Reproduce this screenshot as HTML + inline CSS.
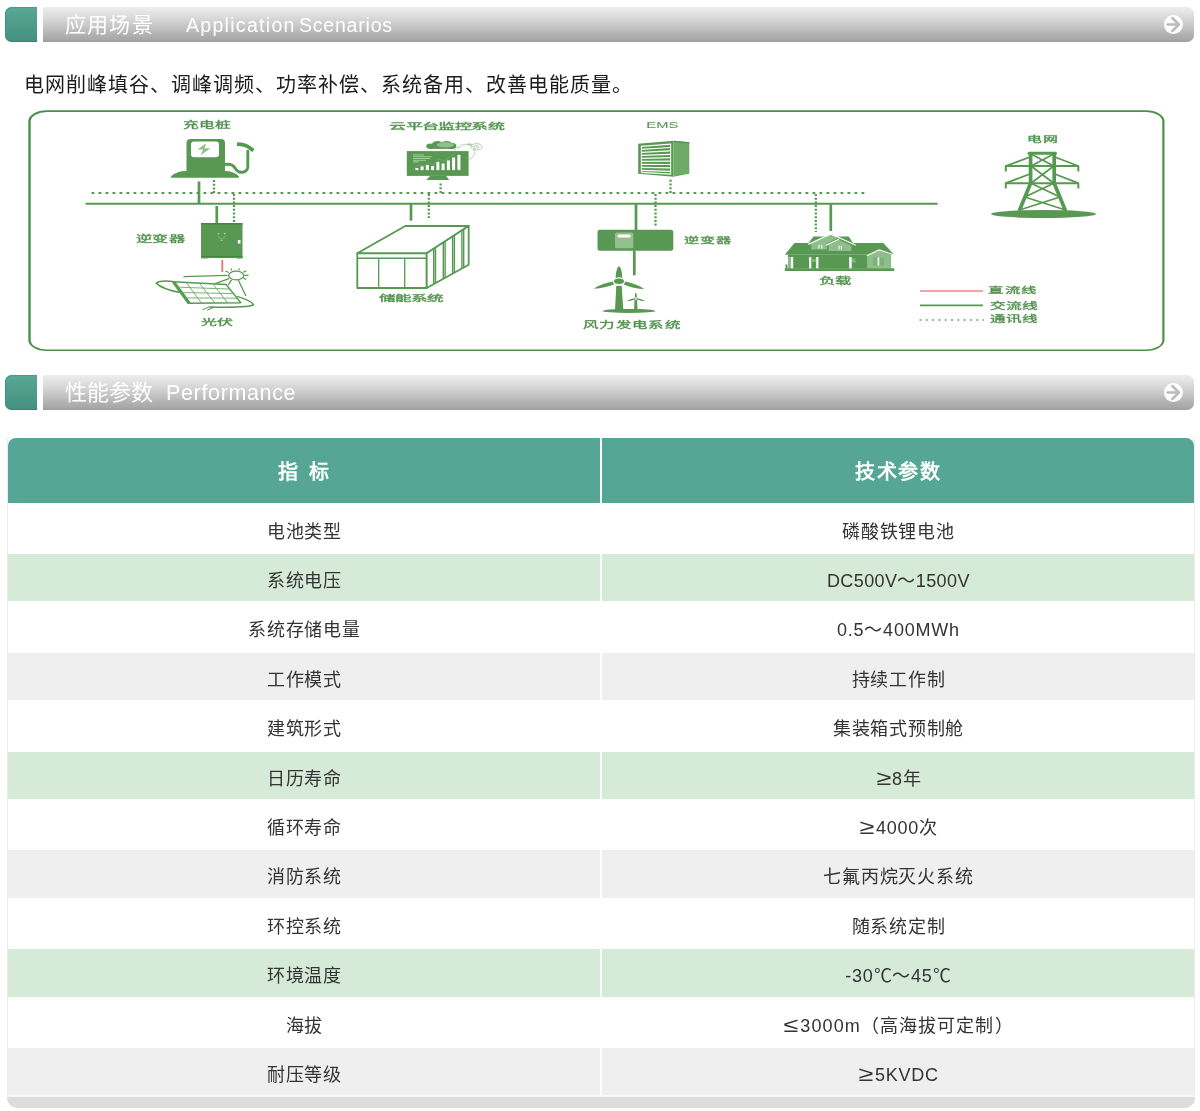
<!DOCTYPE html>
<html lang="zh-CN">
<head>
<meta charset="utf-8">
<title>Application Scenarios</title>
<style>
html,body{margin:0;padding:0;background:#fff;}
body{width:1200px;height:1111px;position:relative;overflow:hidden;font-family:"Liberation Sans",sans-serif;color:#333;}
.abs{position:absolute;}
body>*{will-change:transform;}
.hd-green{position:absolute;left:5px;width:32.2px;height:35px;border-radius:7px 0 0 7px;background:linear-gradient(#57a894,#45907e);box-shadow:inset 1px 0 0 rgba(45,140,115,.55),inset 0 1px 0 rgba(45,150,125,.5),inset 0 -1px 0 rgba(40,125,105,.6);}
.hd-bar{position:absolute;left:43.3px;width:1150.7px;height:34.8px;border-radius:0 7px 7px 0;background:linear-gradient(#eeeeee 0%,#dddddd 25%,#c9c9c9 52%,#b3b3b3 77%,#a7a7a7 94%,#9d9d9d 100%);}
.hd-txt{position:absolute;color:#fff;white-space:nowrap;line-height:35px;height:35px;}
.para{position:absolute;left:24px;top:69.5px;font-weight:300;font-size:20px;line-height:30px;letter-spacing:1px;color:#1c1c1c;white-space:nowrap;}
#tbl{position:absolute;left:7px;top:438.3px;width:1186px;height:658.5px;border-left:1px solid #ececec;border-right:1px solid #ececec;}
.tfoot{position:absolute;left:-1px;top:658.5px;width:1188px;height:11px;background:#dcdcdc;border-radius:0 0 10px 10px;box-shadow:0 -1.8px 0 #f6f6f6;}
.th{position:absolute;top:0;height:64.5px;background:#55a694;color:#fff;font-weight:bold;font-size:20px;text-align:center;line-height:68px;word-spacing:4px;}
.ge{display:inline-block;transform:translateY(-1px) scale(1.5,1.15);margin:0 3.2px 0 2.4px;}
.row{position:absolute;left:0;width:1186px;}
.c{position:absolute;top:0;height:100%;text-align:center;font-size:18px;letter-spacing:0.75px;text-indent:0.75px;color:#333;white-space:nowrap;}
.c1{left:0;width:592px;}
.c2{left:594px;width:592px;}
.g .c{background:#d5ead7;}
.e .c{background:#efefef;}
</style>
</head>
<body>
<!-- header 1 -->
<div class="hd-green" style="top:6.8px"></div>
<div class="hd-bar" style="top:7px"></div>
<div class="hd-txt" style="top:6.5px;left:64.6px;font-size:21px;letter-spacing:1.2px;">应用场景</div>
<div class="hd-txt" style="top:8px;left:186px;font-size:19.5px;letter-spacing:1.3px;">Application<span style="letter-spacing:0.8px;margin-left:-3px"> Scenarios</span></div>
<svg class="abs" style="left:1162px;top:13px" width="24" height="24" viewBox="0 0 24 24"><circle cx="11.5" cy="11.5" r="9.5" fill="#fff"/><path d="M5.6 11.5H16.5M10.3 5L17 11.5L10.3 18" fill="none" stroke="#bcbcbc" stroke-width="2.5" stroke-linecap="round" stroke-linejoin="round"/></svg>

<div class="para">电网削峰填谷、调峰调频、功率补偿、系统备用、改善电能质量。</div>

<!-- DIAGRAM -->
<svg id="dia" class="abs" style="left:0;top:100px" width="1200" height="262" viewBox="0 100 1200 262" font-family="Liberation Sans, sans-serif">
<defs><style>
.g{fill:#589852}.gl{fill:#8fbf8b}.s{fill:none;stroke:#559a50;stroke-linecap:butt}
.t{fill:#4f914b;font-size:9.6px;stroke:#4f914b;stroke-width:.3px}
</style></defs>
<!-- frame -->
<path d="M46.8 110.3H1146.0A18.5 11 0 0 1 1164.5 121.3V340A18.5 11 0 0 1 1146.0 351H46.8A18.5 11 0 0 1 28.3 340V121.3A18.5 11 0 0 1 46.8 110.3ZM47.0 112H1146.0A16.3 9.4 0 0 1 1162.3 121.4V340.20000000000005A16.3 9.4 0 0 1 1146.0 349.6H47.0A16.3 9.4 0 0 1 30.7 340.20000000000005V121.4A16.3 9.4 0 0 1 47.0 112Z" fill="#4b9046" fill-rule="evenodd"/>
<!-- bus lines -->
<line class="s" x1="91.5" y1="193" x2="866" y2="193" stroke-width="2.2" stroke-dasharray="2.8 4.2"/>
<line class="s" x1="85.5" y1="203.8" x2="937.5" y2="203.8" stroke-width="2"/>
<!-- verticals -->
<g class="s" stroke-width="2.7">
<line x1="199" y1="181.5" x2="199" y2="204"/>
<line x1="216.8" y1="206" x2="216.8" y2="223.5"/>
<line x1="411" y1="204" x2="411" y2="220.6"/>
<line x1="636" y1="204" x2="636" y2="230"/>
<line x1="634.3" y1="250.5" x2="634.3" y2="275.3"/>
<line x1="830.8" y1="204" x2="830.8" y2="231"/>
</g>
<g class="s" stroke-width="2.3" stroke-dasharray="2 1.7">
<line x1="214" y1="180" x2="214" y2="193"/>
<line x1="234" y1="194" x2="234" y2="223"/>
<line x1="440.6" y1="183.5" x2="440.6" y2="193"/>
<line x1="428.8" y1="194" x2="428.8" y2="218"/>
<line x1="670.5" y1="179.8" x2="670.5" y2="193"/>
<line x1="655.5" y1="194" x2="655.5" y2="226"/>
<line x1="815.8" y1="194" x2="815.8" y2="232"/>
</g>
<line x1="222.3" y1="260" x2="222.3" y2="272" stroke="#e8766d" stroke-width="1.8"/>

<!-- charger -->
<g class="g">
<path d="M186.5 171V143a4 4 0 0 1 4-4h30.5a4 4 0 0 1 4 4V171q9 0 14 5.5q.3 1.300-1 1.300H172q-1.300 0-1-1.300q5-5.5 15.500-5.500Z"/>
</g>
<rect x="191" y="141.6" width="28" height="15.6" rx="3" fill="#fff"/>
<path d="M206 143.300l-8.500 6.200h5.600l-2.400 5.700 9.800-7h-6z" class="gl"/>
<path class="s" d="M225 164.500c5-1 8 0 10 3.500s4 4.600 7.500 4.200 5.300-2.500 5.300-6V150" stroke-width="2.9"/>
<path class="s" d="M237 144.200q8 .3 11.500 2.800t5 3.500" stroke-width="3.800" stroke-linecap="round"/>
<!-- inverter left -->
<rect class="g" x="201" y="223" width="41.500" height="34.800" rx="1.200"/>
<path d="M201 223h41.500v1.600H201zM201 256h41.500v1.800H201z" fill="#41893e"/>
<path d="M201.500 257h6v1.500h-6zM236.500 257h6v1.500h-6z" class="g"/>
<rect x="237.800" y="240" width="2.700" height="3.500" fill="#fff"/>
<g fill="#b4d6b0"><rect x="217.600" y="233" width="1.800" height="1.200"/><rect x="223.800" y="233" width="1.800" height="1.200"/><rect x="220.700" y="239.600" width="1.800" height="1.200"/></g>
<path d="M218 235.500q0 3 3.600 3t3.600-3" fill="none" stroke="#86b982" stroke-width=".8"/>

<!-- solar -->
<g class="s" stroke-linejoin="round">
<path d="M172.900 281.700L226.100 284.500 240.800 302.800 188.500 303.300Z" stroke-width="1.400" fill="#fff"/>
<path d="M173.500 281.900L189.200 303.200" stroke-width="3.200"/>
<g stroke-width=".9" stroke="#6aa866">
<path d="M186.200 282.400L201.600 303.200M199.500 283.100L214.700 303.100M212.800 283.800L227.700 303"/>
<path d="M176.800 287.100L229.800 289.100M180.700 292.500L233.400 293.600M184.600 297.900L237.100 298.200"/>
</g>
<path d="M173 281.400c-8-.8-14-.3-16.800 1.700 4 4 13 7.500 24.500 9.500" stroke-width="1.500"/>
<path d="M237.200 296.400c8 2.500 14.500 5.300 16.500 8.300-3 2.300-25 2.800-45 2.300" stroke-width="1.500"/>
<path d="M208.700 307L202.300 309.800M214 307.300L207 310.200" stroke-width="1"/>
<path d="M183.500 276.700L227.500 275.300" stroke-width="1.300"/>
<path d="M215.100 283.600L229 278.600" stroke-width="1.300"/>
<path d="M231.500 279.800L228.300 285" stroke-width="1.300"/>
<path d="M238.300 280L245.900 296" stroke-width="1.300"/>
<ellipse cx="236.200" cy="275.500" rx="7.600" ry="4.300" stroke-width="1.300" fill="#fff"/>
<path d="M228.700 272.500L225.500 271M232 270.500L230.800 268.700M238.500 270.300L239.500 268.500M243.200 272.300L246.500 270.700M244.500 275.400L248.500 275.400M243.500 278.300L246.200 279.400" stroke-width="1.200"/>
</g>
<!-- monitor -->
<rect class="g" x="406.800" y="151.100" width="61.800" height="24.800"/>
<path class="g" d="M430 175.900h16.100l3 4H426.300z"/>
<g fill="#fff">
<rect x="415.400" y="168" width="3" height="2.100"/><rect x="420.600" y="166.400" width="3" height="3.700"/><rect x="425.900" y="165" width="3" height="5.100"/><rect x="431.100" y="166.100" width="3" height="4"/><rect x="436.400" y="161.900" width="3" height="8.200"/><rect x="441.600" y="163.500" width="3" height="6.600"/><rect x="446.900" y="160.500" width="3" height="9.600"/><rect x="452.100" y="157.500" width="3" height="12.600"/><rect x="457.400" y="154.900" width="3" height="15.200"/>
</g>
<g fill="#a5cca1"><rect x="413.100" y="154.400" width="11" height="1"/><rect x="413.100" y="156.200" width="18.500" height="1"/><rect x="413.100" y="158" width="17" height="1"/><rect x="413.100" y="159.800" width="13" height="1"/><rect x="413.100" y="161.400" width="5.600" height="1"/></g>
<path d="M413 169l6-4 5 1 5-3.500 5 2.500 5-6 5 2 5-3.500 6-4" fill="none" stroke="#86b982" stroke-width=".5"/>
<g class="g"><ellipse cx="430.3" cy="146.2" rx="4" ry="2.7"/><ellipse cx="437.5" cy="144.4" rx="5.5" ry="3.4"/><ellipse cx="446.5" cy="144.3" rx="6" ry="3.3"/><ellipse cx="452.5" cy="146" rx="3.8" ry="2.9"/><rect x="430" y="145" width="22.5" height="3.9"/></g>
<ellipse class="gl" cx="445.400" cy="144.800" rx="8.600" ry="2.700"/>
<g fill="none" stroke="#9cc698" stroke-width=".8">
<path d="M454.500 151c1-3 3-4 5-3.500.5-2.500 3.500-3.500 6-2.500 2-1.500 5-1 6 1 2.500.5 3.500 3 2.500 5 1.500 2 1 4.500-1.500 5.500-.5 2-2.500 3-4.500 2.500"/>
<ellipse cx="476.500" cy="146.800" rx="5.500" ry="3.200"/><ellipse cx="476.500" cy="146.800" rx="2.300" ry="1.300"/>
</g>
<ellipse cx="469.500" cy="144.500" rx="2.300" ry="1" fill="#9cc698"/>
<!-- container -->
<g class="s" stroke-width="1.800" stroke-linejoin="round">
<path d="M357.300 253.300L405.300 226H468.700L426.700 253.300Z" fill="#fff"/>
<path d="M357.300 253.300H426.700V288H357.300Z" fill="#fff"/>
<path d="M426.700 253.300L468.700 226V264.700L426.700 288Z" fill="#fff"/>
<path d="M357.300 258.200H426.700" stroke-width="1.500"/>
<path d="M378.700 258.200V288M404.700 258.200V288" stroke-width="1.300"/>
<g stroke-width="1.4">
<path d="M433.700 248.700V284.100M435.500 247.600V283.100M443.300 242.500V278.800M445.100 241.300V277.800M452.600 236.500V273.600M454.400 235.300V272.600M461.900 230.400V268.500M463.700 229.200V267.500"/>
</g>
</g>

<!-- EMS -->
<path class="g" d="M638.200 143.800L673.500 140.700V176.800L638.200 173.700Z"/>
<path d="M673.500 140.700L689.300 142.300V173.800L673.500 176.800Z" fill="#6eab69"/>
<path d="M673.500 140.700L689.300 142.300V143.500L673.500 142.100Z" fill="#4d9149"/>
<g stroke="#fff" stroke-width="1.250" fill="none">
<path d="M641.500 146.300L670.500 144.100M641.500 149.300L670.500 147.500M641.500 152.300L670.500 150.900M641.500 155.300L670.500 154.300M641.500 158.300L670.500 157.700M641.500 161.300L670.500 161.100M641.500 164.300L670.500 164.500M641.500 167.300L670.500 167.900M641.500 170.300L670.500 171.300M641.500 172.400L670.500 174.200"/>
<path d="M641.300 145.500V172.500M670.700 143.500V174.500" stroke-width="1"/>
</g>
<!-- inverter right -->
<rect class="g" x="597.500" y="229.700" width="75.800" height="21.100" rx="2.500"/>
<rect x="615" y="232.500" width="18.300" height="15.800" rx="1.500" fill="#93c08f"/>
<rect x="617.500" y="234.600" width="13.300" height="3" rx="1.500" fill="#fff"/>
<!-- turbines -->
<g class="g">
<ellipse cx="619" cy="281.300" rx="5" ry="2.700"/>
<path d="M619 266.300c2 .8 3.400 7 3.300 11.700q-3.300-1.400-6.600 0c-.1-4.700 1.300-10.900 3.300-11.700z"/>
<path d="M593.700 288.700c5-3.500 12-6 19-7.300q.3 1.800 1.700 2.900c-6 2.500-14 4.500-20.700 4.400z"/>
<path d="M644.300 289c-5-3.500-12-6.200-19-7.500q-.3 1.800-1.700 2.900c6 2.600 14 4.600 20.700 4.600z"/>
<path d="M616.300 285.700q2.700 .8 5.400 0L623.300 310H615z"/>
<ellipse cx="629" cy="310.900" rx="26.500" ry="2"/>
<path d="M635.800 292.700q1.100 .5 1 4.700h-2q-.1-4.200 1-4.700z"/>
<path d="M626 301.300q4.500-2.600 9-3.300l.5 1.300q-4.500 1.800-9.500 2z"/>
<path d="M645.700 301.300q-4.500-2.600-9-3.300l-.5 1.300q4.500 1.800 9.500 2z"/>
<path d="M634.500 299.800h2.600l.4 10h-3.400z"/>
</g>
<!-- house -->
<g>
<path class="g" d="M813.500 236.400H848.700L853 243H808.600Z"/>
<path class="g" d="M794.500 242.900H883.300L894.200 254.800H784.800Z"/>
<path class="g" d="M788 254.800H891V268.500H788Z"/>
<path d="M788 257H791V268.300H788Z" fill="#8fbe8a"/>
<path class="g" d="M784.800 268.300H894.200V271H784.800Z"/>
<path d="M785.500 264.500H787.500V268.300H785.500Z" class="g"/>
<path d="M811.300 243.500L830.800 234.500 838 238 827 243.500V249.400H811.300Z" fill="#8fbe8a"/>
<path d="M828.600 245L838.900 239.800 851.400 245.500V251H828.600Z" fill="#8fbe8a"/>
<path d="M867.100 255.300L879 250.400 890.900 255V268.300H867.100Z" fill="#8fbe8a"/>
<g fill="none" stroke="#fff" stroke-width="1.200">
<path d="M808.400 244.400L830.800 233.900 855.800 245.200"/>
<path d="M826.500 245.100L838.900 239.200"/>
<path d="M866.800 255.700L879 250 893.700 254.700"/>
</g>
<g fill="#fff">
<rect x="791" y="257" width="2.200" height="11.300"/><rect x="809.100" y="257" width="2.200" height="11.300"/><rect x="816.200" y="257" width="2.200" height="11.300"/><rect x="849.200" y="257" width="2.500" height="11.300"/>
<rect x="818.500" y="244.800" width="1" height="3.800"/><rect x="821.300" y="244.800" width="1" height="3.800"/><rect x="838.500" y="245.600" width="1" height="4"/><rect x="840.800" y="245.600" width="1" height="4"/>
<rect x="877.800" y="257.500" width="1.300" height="8"/>
</g>
<g fill="#7db378"><rect x="873" y="257.500" width="4" height="8"/><rect x="880" y="257.500" width="4" height="8"/><rect x="811.500" y="259" width="4.500" height="3"/><rect x="852" y="258.500" width="3.500" height="4"/></g>
</g>
<!-- tower -->
<g class="s" stroke-linejoin="round">
<path d="M1029 153.200H1055.500" stroke-width="3" stroke-linecap="round"/>
<path d="M1030.600 153V183.200L1019.200 211M1054.200 153V183.200L1065.600 211" stroke-width="3.7"/>
<path d="M1005.800 171.500V166H1078.300V171.500M1005.800 188.500V183.200H1078.300V188.500" stroke-width="2"/>
<path d="M1005.800 166L1030 157M1078.300 166L1054.800 157M1005.800 183.200L1030 174M1078.300 183.200L1054.800 174" stroke-width="1.800"/>
<path d="M1031 154L1053.800 166M1053.800 154L1031 166M1031 166L1053.800 183.200M1053.800 166L1031 183.200M1031 183.200L1060 197M1053.800 183.200L1024.800 197M1024.800 197L1064 209.500M1060 197L1021 209.500" stroke-width="1.700"/>
</g>
<ellipse class="g" cx="1043.500" cy="214" rx="52.500" ry="4"/>
<!-- legend -->
<line x1="920" y1="291.1" x2="983" y2="291.1" stroke="#ec8a83" stroke-width="1.5"/>
<line class="s" x1="920" y1="305.4" x2="983" y2="305.4" stroke-width="1.9"/>
<line x1="919.5" y1="320" x2="984" y2="320" stroke="#6aa866" stroke-width="1.4" stroke-dasharray="2 4.3"/>
<!-- labels -->
<g class="t">
<text x="182.8" y="128.3" font-size="8.7" textLength="48.9" lengthAdjust="spacingAndGlyphs">充电桩</text>
<text x="389.2" y="129.4" font-size="8.3" textLength="114.8" lengthAdjust="spacingAndGlyphs">云平台监控系统</text>
<text x="1027.3" y="141.9" font-size="7.7" textLength="30.9" lengthAdjust="spacingAndGlyphs">电网</text>
<text x="135.8" y="242.0" font-size="8.9" textLength="49.1" lengthAdjust="spacingAndGlyphs">逆变器</text>
<text x="201.1" y="324.7" font-size="8.2" textLength="31.1" lengthAdjust="spacingAndGlyphs">光伏</text>
<text x="378.5" y="300.7" font-size="8.2" textLength="65.0" lengthAdjust="spacingAndGlyphs">储能系统</text>
<text x="683.8" y="242.7" font-size="8.5" textLength="48.1" lengthAdjust="spacingAndGlyphs">逆变器</text>
<text x="583.1" y="327.6" font-size="9.5" textLength="97.9" lengthAdjust="spacingAndGlyphs">风力发电系统</text>
<text x="819.0" y="284.0" font-size="9.1" textLength="32.4" lengthAdjust="spacingAndGlyphs">负载</text>
<text x="988.3" y="292.9" font-size="8.5" textLength="48.9" lengthAdjust="spacingAndGlyphs">直流线</text>
<text x="990.3" y="308.5" font-size="8.8" textLength="48.2" lengthAdjust="spacingAndGlyphs">交流线</text>
<text x="989.8" y="322.4" font-size="8.6" textLength="48.7" lengthAdjust="spacingAndGlyphs">通讯线</text>
<text x="646.3" y="128.2" font-size="9.2" stroke="none" textLength="32" lengthAdjust="spacingAndGlyphs">EMS</text>
</g>
</svg>

<!-- header 2 -->
<div class="hd-green" style="top:375.3px;height:35.3px"></div>
<div class="hd-bar" style="top:375.4px;height:35.2px"></div>
<div class="hd-txt" style="top:374.5px;left:64.9px;font-size:22px;letter-spacing:0px;">性能参数</div>
<div class="hd-txt" style="top:375.8px;left:165.6px;font-size:21.5px;letter-spacing:0.65px;">Performance</div>
<svg class="abs" style="left:1162px;top:381px" width="24" height="24" viewBox="0 0 24 24"><circle cx="11.5" cy="11.5" r="9.5" fill="#fff"/><path d="M5.6 11.5H16.5M10.3 5L17 11.5L10.3 18" fill="none" stroke="#bcbcbc" stroke-width="2.5" stroke-linecap="round" stroke-linejoin="round"/></svg>

<!-- TABLE -->
<div id="tbl">
<div class="th" style="left:0;width:592px;border-radius:8px 0 0 0;letter-spacing:1px;">指 标</div>
<div class="th" style="left:594px;width:592px;border-radius:0 8px 0 0;letter-spacing:1.5px;">技术参数</div>
<div class="row " style="top:66.5px;height:47.5px;line-height:55px;"><div class="c c1">电池类型</div><div class="c c2">磷酸铁锂电池</div></div>
<div class="row g" style="top:115.9px;height:47.5px;line-height:55px;"><div class="c c1">系统电压</div><div class="c c2" style="letter-spacing:0.4px">DC500V～1500V</div></div>
<div class="row " style="top:165.3px;height:47.5px;line-height:55px;"><div class="c c1">系统存储电量</div><div class="c c2">0.5～400MWh</div></div>
<div class="row e" style="top:214.7px;height:47.5px;line-height:55px;"><div class="c c1">工作模式</div><div class="c c2">持续工作制</div></div>
<div class="row " style="top:264.1px;height:47.5px;line-height:55px;"><div class="c c1">建筑形式</div><div class="c c2">集装箱式预制舱</div></div>
<div class="row g" style="top:313.5px;height:47.5px;line-height:55px;"><div class="c c1">日历寿命</div><div class="c c2"><span class="ge">≥</span>8年</div></div>
<div class="row " style="top:362.9px;height:47.5px;line-height:55px;"><div class="c c1">循环寿命</div><div class="c c2"><span class="ge">≥</span>4000次</div></div>
<div class="row e" style="top:412.3px;height:47.5px;line-height:55px;"><div class="c c1">消防系统</div><div class="c c2">七氟丙烷灭火系统</div></div>
<div class="row " style="top:461.7px;height:47.5px;line-height:55px;"><div class="c c1">环控系统</div><div class="c c2">随系统定制</div></div>
<div class="row g" style="top:511.1px;height:47.5px;line-height:55px;"><div class="c c1">环境温度</div><div class="c c2">-30℃～45℃</div></div>
<div class="row " style="top:560.5px;height:47.5px;line-height:55px;"><div class="c c1">海拔</div><div class="c c2" style="letter-spacing:1.1px"><span class="ge">≤</span>3000m（高海拔可定制）</div></div>
<div class="row e" style="top:609.9px;height:47.5px;line-height:55px;"><div class="c c1">耐压等级</div><div class="c c2"><span class="ge">≥</span>5KVDC</div></div>
<div class="tfoot"></div>
</div>
</body>
</html>
